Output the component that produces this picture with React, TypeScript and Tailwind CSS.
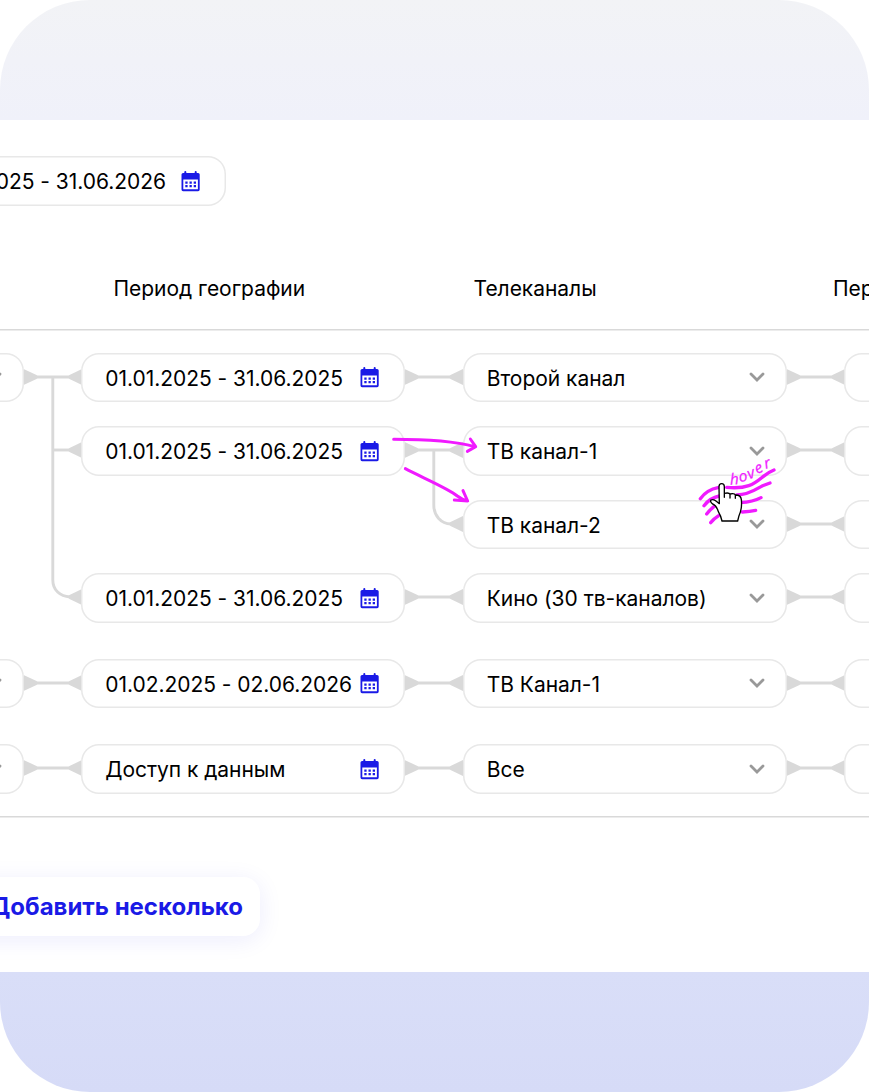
import React from 'react';
import clsx from 'clsx';

type LinkKind = 'full' | 'branch' | 'cornerShort' | 'cornerLong' | 'none';

type Row = {
  geo: boolean;
  period?: string;
  channel: string;
  firstLink: LinkKind;
  secondLink: LinkKind;
};

const groups: Row[][] = [
  [
    { geo: true, period: '01.01.2025 - 31.06.2025', channel: 'Второй канал', firstLink: 'full', secondLink: 'full' },
    { geo: false, period: '01.01.2025 - 31.06.2025', channel: 'ТВ канал-1', firstLink: 'branch', secondLink: 'full' },
    { geo: false, channel: 'ТВ канал-2', firstLink: 'none', secondLink: 'cornerShort' },
    { geo: false, period: '01.01.2025 - 31.06.2025', channel: 'Кино (30 тв-каналов)', firstLink: 'cornerLong', secondLink: 'full' },
  ],
  [{ geo: true, period: '01.02.2025 - 02.06.2026', channel: 'ТВ Канал-1', firstLink: 'full', secondLink: 'full' }],
  [{ geo: true, period: 'Доступ к данным', channel: 'Все', firstLink: 'full', secondLink: 'full' }],
];

const linkPaths: Record<LinkKind, string> = {
  full: 'M10 24H48',
  branch: 'M28.8 24H48',
  cornerShort: 'M28.8 -49.5V5C28.8 16 36 23.5 46 24',
  cornerLong: 'M28.8 -196.5V7C28.8 17 36 23.5 46 24',
  none: '',
};

function CalendarIcon() {
  return (
    <svg width="19" height="21" viewBox="0 0 19 21" className="mt-px mr-[-0.5px] shrink-0">
      <path
        fill="#1a1ae6"
        fillRule="evenodd"
        d="M3.3 1a1 1 0 0 1 2 0v1h8.400V1a1 1 0 0 1 2 0v1h1.400a1.6 1.6 0 0 1 1.6 1.600v15a1.6 1.6 0 0 1-1.6 1.600H2.100a1.6 1.6 0 0 1-1.600-1.600v-15A1.6 1.6 0 0 1 2.100 2H3.300zM2.300 8.400v9.800h14.600V8.400z"
      />
      <path
        fill="#1a1ae6"
        d="M4.3 10.4h2.3v2.3H4.3zM8.5 10.4h2.3v2.3H8.5zM12.7 10.4h2.3v2.3h-2.3zM4.3 14h2.3v2.3H4.3zM8.5 14h2.3v2.3H8.5zM12.7 14h2.3v2.3h-2.3z"
      />
    </svg>
  );
}

function Chevron() {
  return (
    <svg width="16" height="10" viewBox="0 0 16 10" className="mr-[-5px] shrink-0">
      <path d="M2 2l6 6 6-6" fill="none" stroke="#999999" strokeWidth="2.8" strokeLinecap="round" />
    </svg>
  );
}

type FieldProps = { label?: string; icon: 'calendar' | 'chevron'; className?: string };

function Field({ label = '', icon, className = 'w-[324px]' }: FieldProps) {
  return (
    <div
      className={clsx(
        'relative flex h-[49.5px] shrink-0 items-center justify-between rounded-[18px] bg-white pr-[26.5px] pl-6 shadow-[inset_0_0_0_1.5px_#e8e8e8]',
        className
      )}>
      <span className="pt-[3px] whitespace-nowrap">{label}</span>
      {icon === 'calendar' ? <CalendarIcon /> : <Chevron />}
    </div>
  );
}

function Link({ kind }: { kind: LinkKind }) {
  return (
    <svg width="57.5" height="49.5" viewBox="0 0 57.5 49.5" className="shrink-0 overflow-visible">
      {kind !== 'none' && (
        <>
          <path d={linkPaths[kind]} fill="none" stroke="#d9d9d9" strokeWidth="2.9" />
          <path d="M59 15.5L45.5 22Q43 24 45.5 26L59 32.5z" fill="#d9d9d9" />
        </>
      )}
      {kind === 'full' && <path d="M-1.5 15.5L12.5 22Q15 24 12.5 26L-1.5 32.5z" fill="#d9d9d9" />}
    </svg>
  );
}

function TableRow({ row }: { row: Row }) {
  return (
    <div className="flex">
      {row.geo ? <Field icon="chevron" className="-ml-[300.3px] w-[324px]" /> : <div className="w-[23.7px] shrink-0" />}
      <Link kind={row.firstLink} />
      {row.period ? <Field label={row.period} icon="calendar" /> : <div className="w-[324px] shrink-0" />}
      <Link kind={row.secondLink} />
      <Field label={row.channel} icon="chevron" />
      <Link kind="full" />
      <Field icon="calendar" />
    </div>
  );
}

function Arrows() {
  return (
    <svg
      width="240"
      height="220"
      viewBox="0 0 720 660"
      className="pointer-events-none absolute top-[340px] left-[340px]"
      fill="none"
      stroke="#f01aff"
      strokeWidth="9"
      strokeLinecap="round"
      strokeLinejoin="round">
      <path d="M161 298C240 298 330 300 404 320M391 297L407 320L382 334" />
      <path d="M196 386C245 412 325 445 352 468Q365 478 382 483M369 452L383 483L343 480" />
    </svg>
  );
}

function HoverMark() {
  return (
    <svg
      width="100"
      height="80"
      viewBox="0 0 300 240"
      className="pointer-events-none absolute top-[450px] left-[690px] overflow-visible">
      <g fill="none" stroke="#f01aff" strokeWidth="10" strokeLinecap="round">
        <path d="M31 146C46 126 62 117 84 113M110 112C170 118 192 102 215 83Q234 67 252 60" />
        <path d="M42 167C55 150 68 142 88 138M140 135C180 134 200 116 218 107L240 99" />
        <path d="M50 192Q65 172 84 163M150 158Q190 156 213 143" />
        <path d="M62 218Q72 206 86 197M157 186Q180 185 197 181" />
      </g>
      <path
        d="M88 161L87 110Q87 101 95 101Q103 101 103 110V142V130Q118 127 120 133V144V132Q134 129 136 135V145V135Q152 134 154 148Q157 176 147 197L143 213H96Q93 198 85 185Q79 166 68 162Q59 155 63 150Q71 146 79 154Z"
        fill="#ffffff"
        stroke="#000000"
        strokeWidth="4"
        strokeLinejoin="round"
      />
      <text
        x="121 149 178 202 227"
        y="104 97 88 73 57"
        rotate="-4 -12 -20 -26 -18"
        fill="#f01aff"
        stroke="#f01aff"
        strokeWidth="0.8"
        className="font-['Open_Sans',sans-serif] text-[46px] font-normal italic">
        hover
      </text>
    </svg>
  );
}

export default function App() {
  return (
    <div className="relative h-[1092px] w-[869px] overflow-hidden rounded-[90px] bg-[linear-gradient(180deg,#f2f3f6_0%,#f0f1fa_11%,#d9def8_89%,#d6dbf7_100%)] py-[120px] font-['Inter',sans-serif] text-[21px] leading-7 tracking-[-0.03px] text-black">
      <main className="flex h-[852px] flex-col overflow-hidden bg-white pt-9">
        <Field label="01.01.2025 - 31.06.2026" icon="calendar" className="-ml-[96px] w-[322px]" />

        <div className="mt-[69.5px] ml-[113.5px] flex shrink-0">
          <div className="w-[360px] shrink-0">Период географии</div>
          <div className="w-[359.5px] shrink-0">Телеканалы</div>
          <div className="shrink-0 whitespace-nowrap">Период</div>
        </div>

        <section className="mt-[25.5px] flex shrink-0 flex-col gap-9 border-y border-[#d9d9d9] pt-[23px] pb-[22.5px] shadow-[0_1px_0_#ececec,inset_0_1px_0_#ececec]">
          {groups.map((rows, i) => (
            <div key={i} className="flex flex-col gap-6">
              {rows.map((row, j) => (
                <TableRow key={j} row={row} />
              ))}
            </div>
          ))}
        </section>

        <button className="mt-[60px] -ml-[60px] flex h-[59px] w-[320px] shrink-0 items-center justify-end rounded-[17px] bg-white pt-px pr-[17px] text-[24px] font-bold tracking-normal whitespace-nowrap text-[#1a1ae6] shadow-[0_4px_24px_rgba(26,26,230,0.08)]">
          Добавить несколько
        </button>
      </main>
      <Arrows />
      <HoverMark />
    </div>
  );
}
